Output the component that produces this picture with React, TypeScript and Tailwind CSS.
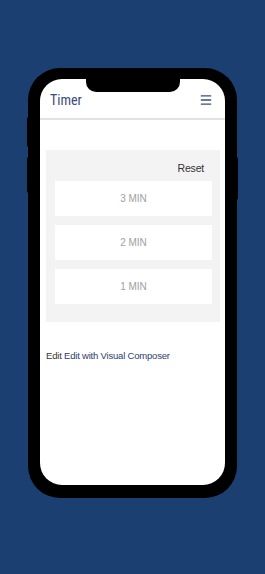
import { Menu } from "lucide-react";

const times = ["3 MIN", "2 MIN", "1 MIN"];

export default function App() {
  return (
    <div className="w-[265px] h-[574px] bg-[#1b3f71] flex justify-center pt-[68px] overflow-hidden">
      <div className="relative w-[209px] h-[430px] bg-black rounded-[32px] pl-[12px] pr-[12px] pt-[11px] pb-[13px]">
        {/* side buttons */}
        <div className="absolute left-[-1px] top-[49px] w-[2px] h-[30px] bg-black rounded-l-sm" />
        <div className="absolute left-[-1px] top-[89px] w-[2px] h-[36px] bg-black rounded-l-sm" />
        <div className="absolute right-[-1px] top-[89px] w-[2px] h-[43px] bg-black rounded-r-sm" />

        <div className="relative h-full bg-white rounded-[22px] overflow-hidden">
          <div className="absolute left-[46px] top-0 w-[94px] h-[13px] bg-black rounded-b-[10px]" />

          <header className="h-[41px] flex items-center justify-between pl-[10px] pr-[12px] pt-[2px] border-b-2 border-[#e2e2e2]">
            <span className="text-[14px] text-[#3b4b7c] font-['Liberation_Sans_Narrow','Roboto_Condensed','Roboto',sans-serif] leading-none">Timer</span>
            <Menu className="w-[14px] h-[14px] text-[#3b4b7c]" strokeWidth={2.4} />
          </header>

          <div className="mt-[30px] ml-[6px] mr-[5px] bg-[#f3f3f3] pt-[11px] pb-[18px] pl-[9px] pr-[8px] font-['Liberation_Sans',sans-serif]">
            <div className="flex justify-end pr-[8px] text-[10.5px] text-[#333] leading-[14px] mb-[6px] tracking-[-0.2px]">Reset</div>
            <div className="flex flex-col gap-[9px]">
              {times.map((t) => (
                <div key={t} className="h-[35px] bg-white flex items-center justify-center text-[10px] text-[#a0a0a0]">
                  {t}
                </div>
              ))}
            </div>
          </div>

          <p className="mt-[27px] ml-[6px] text-[9.5px] leading-[13px] tracking-[-0.2px] text-[#333] font-['Liberation_Sans',sans-serif]">
            Edit <span className="text-[#2c3d6e]">Edit with Visual Composer</span>
          </p>
        </div>
      </div>
    </div>
  );
}
